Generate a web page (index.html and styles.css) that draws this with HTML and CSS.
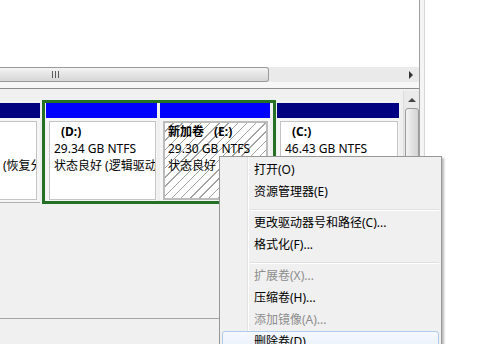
FILE: index.html
```html
<!DOCTYPE html>
<html lang="zh-CN">
<head>
  <meta charset="UTF-8">
  <title>磁盘管理</title>
  <link rel="stylesheet" href="styles.css">
</head>
<body>
<div class="screen">
  <div class="window">
    <div class="list"></div>
    <div class="hscroll">
      <div class="hthumb"><span class="grip"></span></div>
      <div class="htrack"><span class="arrow-right"></span></div>
    </div>
    <div class="splitter"></div>
    <div class="disks">
      <div class="disk-pane">
        <div class="disk-row">
          <div class="part part-cut">
            <div class="bar bar-primary"></div>
            <div class="box">
              <div class="line"></div>
              <div class="line"></div>
              <div class="line">(恢复分区)</div>
            </div>
          </div>
          <div class="selected">
            <div class="part part-d">
              <div class="bar bar-logical"></div>
              <div class="box">
                <div class="line"><b class="label">(D:)</b></div>
                <div class="line">29.34 GB NTFS</div>
                <div class="line">状态良好 (逻辑驱动器)</div>
              </div>
            </div>
            <div class="part part-e">
              <div class="bar bar-logical"></div>
              <div class="box box-hatch">
                <div class="line"><b>新加卷<span class="label-gap">(E:)</span></b></div>
                <div class="line">29.30 GB NTFS</div>
                <div class="line">状态良好</div>
              </div>
            </div>
          </div>
          <div class="part part-c">
            <div class="bar bar-primary"></div>
            <div class="box">
              <div class="line"><b class="label">(C:)</b></div>
              <div class="line">46.43 GB NTFS</div>
            </div>
          </div>
        </div>
        <div class="legend-line"></div>
      </div>
      <div class="vscroll">
        <span class="arrow-up"></span>
        <div class="vthumb"></div>
      </div>
    </div>
  </div>
  <div class="frame-edge"></div>
</div>

<ul class="menu">
  <li class="item">打开(O)</li>
  <li class="item">资源管理器(E)</li>
  <li class="sep"></li>
  <li class="item">更改驱动器号和路径(C)...</li>
  <li class="item">格式化(F)...</li>
  <li class="sep"></li>
  <li class="item is-disabled">扩展卷(X)...</li>
  <li class="item">压缩卷(H)...</li>
  <li class="item is-disabled">添加镜像(A)...</li>
  <li class="item is-hover">删除卷(D)...</li>
</ul>
</body>
</html>
```

FILE: styles.css
```css
html, body {
  height: 100%;
  margin: 0;
}
body {
  font-family: "Noto Sans", "Noto Sans CJK SC", sans-serif;
  font-size: 12px;
  color: #000;
  background: #fff;
  overflow: hidden;
  position: relative;
}
.screen {
  display: flex;
  height: 344px;
}
.window {
  width: 419px;
  display: flex;
  flex-direction: column;
  background: #f0f0f0;
}
.frame-edge {
  width: 4px;
  border-left: 1px solid #a0a0a0;
  border-right: 1px solid #d6d6d6;
  background: #f4f4f4;
}

/* list + horizontal scrollbar */
.list {
  height: 67px;
  background: #fff;
}
.hscroll {
  height: 15px;
  display: flex;
  background: #eaeaea;
}
.hthumb {
  width: 268px;
  height: 13px;
  border: 1px solid #9a9a9a;
  border-left: none;
  border-radius: 0 3px 3px 0;
  background: linear-gradient(#f4f4f4, #e4e4e4 50%, #d6d6d6);
  position: relative;
}
.grip {
  position: absolute;
  left: 52px;
  top: 3px;
  width: 7px;
  height: 7px;
  background: repeating-linear-gradient(90deg, #5a5a5a 0 1px, transparent 1px 3px);
}
.htrack {
  flex: 1;
  display: flex;
  justify-content: flex-end;
  align-items: center;
  padding-right: 6px;
}
.arrow-right {
  width: 0;
  height: 0;
  border-top: 4px solid transparent;
  border-bottom: 4px solid transparent;
  border-left: 4px solid #333;
}
.splitter {
  height: 6px;
  background: #f7f7f7;
  border-bottom: 1px solid #8c8c8c;
}

/* disk view */
.disks {
  flex: 1;
  display: flex;
  overflow: hidden;
}
.disk-pane {
  width: 403px;
  padding-top: 11px;
}
.disk-row {
  display: flex;
  align-items: flex-start;
}
.part {
  height: 98px;
  display: flex;
  flex-direction: column;
  background: #f6f6f6;
}
.part-cut {
  width: 40px;
  margin-top: 3px;
  padding-bottom: 1px;
  border-bottom: 1px solid #b0b0b0;
}
.part-d { width: 111px; }
.part-e { width: 110px; }
.part-c {
  width: 122px;
  margin-top: 3px;
  margin-left: 1px;
}
.selected {
  display: flex;
  gap: 3px;
  border: 3px solid #247024;
  padding: 0 3px 0 1px;
  margin-left: 2px;
}
.bar {
  height: 15px;
  flex: none;
}
.bar-primary { background: #000080; }
.bar-logical { background: #0000ff; }
.box {
  flex: 1;
  margin: 3px 1px 1px 3px;
  padding: 1px 0 0 4px;
  border: 1px solid #c4c4c4;
  background: #fff;
  overflow: hidden;
}
.part-cut .box {
  margin: 3px 3px 1px 0;
  padding-left: 3px;
  border-left: none;
}
.box-hatch {
  margin: 3px 2px 1px 3px;
  border: 2px solid #bcbcbc;
  padding: 0 0 0 3px;
  background: repeating-linear-gradient(135deg, #fff 0 5.5px, #a2a2a2 5.5px 6.5px);
}
.line {
  height: 17px;
  line-height: 17px;
  white-space: nowrap;
}
.label {
  margin-left: 7px;
}
.label-gap {
  margin-left: 10px;
}
.legend-line {
  margin-top: 114px;
  border-top: 1px solid #a4a4a4;
}

/* vertical scrollbar */
.vscroll {
  width: 15px;
  margin-top: 2px;
  display: flex;
  flex-direction: column;
  align-items: center;
  background: #eaeaea;
  border-left: 1px solid #dcdcdc;
}
.arrow-up {
  margin-top: 7px;
  width: 0;
  height: 0;
  border-left: 4px solid transparent;
  border-right: 4px solid transparent;
  border-bottom: 4px solid #444;
}
.vthumb {
  margin-top: 6px;
  width: 12px;
  height: 200px;
  border: 1px solid #9a9a9a;
  border-radius: 3px;
  background: linear-gradient(90deg, #f4f4f4, #e2e2e2 50%, #d4d4d4);
}

/* context menu */
.menu {
  position: absolute;
  left: 219px;
  top: 156px;
  width: 223px;
  height: 188px;
  box-sizing: border-box;
  margin: 0;
  padding: 2px;
  list-style: none;
  overflow: hidden;
  border: 1px solid #979797;
  border-bottom: none;
  background:
    linear-gradient(90deg, transparent 27px, #e2e3e3 27px 28px, #fff 28px 29px, transparent 29px),
    #f0f0f0;
  box-shadow: 2px 2px 2px rgba(0, 0, 0, .28);
}
.item {
  height: 22px;
  line-height: 22px;
  padding-left: 32px;
  white-space: nowrap;
}
.is-disabled {
  color: #8d8d8d;
}
.is-hover {
  height: 20px;
  line-height: 20px;
  padding-left: 31px;
  border: 1px solid #aecbeb;
  border-radius: 3px;
  background: linear-gradient(#f6f9fd, #e7effa);
}
.sep {
  height: 3px;
  margin: 3px 0 2px 28px;
  border-bottom: 1px solid #e0e0e0;
  box-shadow: 0 1px 0 #fff;
}
```
